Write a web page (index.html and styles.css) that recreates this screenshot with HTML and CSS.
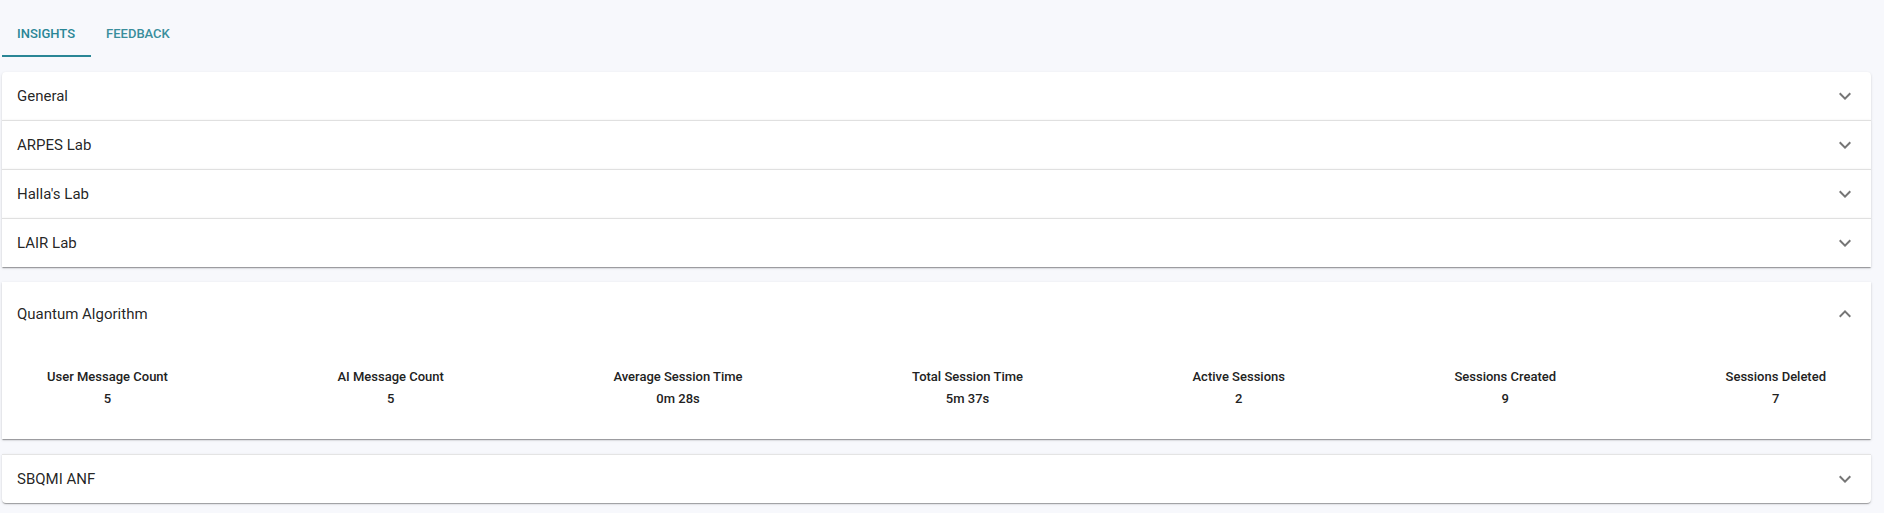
FILE: index.html
```html
<!DOCTYPE html>
<html lang="en">
<head>
<meta charset="utf-8">
<title>Insights</title>
<link rel="stylesheet" href="styles.css">
</head>
<body>
<div class="page">
  <div class="tabs">
    <div class="tab tab-active">INSIGHTS</div>
    <div class="tab">FEEDBACK</div>
  </div>

  <div class="accordions">
    <div class="acc acc-first">
      <div class="summary"><span class="title">General</span><svg class="chev" viewBox="0 0 24 24"><path d="M16.59 8.59 12 13.17 7.41 8.59 6 10l6 6 6-6z"/></svg></div>
    </div>
    <div class="acc acc-line">
      <div class="summary"><span class="title">ARPES Lab</span><svg class="chev" viewBox="0 0 24 24"><path d="M16.59 8.59 12 13.17 7.41 8.59 6 10l6 6 6-6z"/></svg></div>
    </div>
    <div class="acc acc-line">
      <div class="summary"><span class="title">Halla's Lab</span><svg class="chev" viewBox="0 0 24 24"><path d="M16.59 8.59 12 13.17 7.41 8.59 6 10l6 6 6-6z"/></svg></div>
    </div>
    <div class="acc acc-line">
      <div class="summary"><span class="title">LAIR Lab</span><svg class="chev" viewBox="0 0 24 24"><path d="M16.59 8.59 12 13.17 7.41 8.59 6 10l6 6 6-6z"/></svg></div>
    </div>

    <div class="acc acc-expanded">
      <div class="summary summary-expanded"><span class="title">Quantum Algorithm</span><svg class="chev chev-up" viewBox="0 0 24 24"><path d="M16.59 8.59 12 13.17 7.41 8.59 6 10l6 6 6-6z"/></svg></div>
      <div class="details">
        <div class="stats">
          <div class="stat"><div class="stat-label">User Message Count</div><div class="stat-value">5</div></div>
          <div class="stat"><div class="stat-label">AI Message Count</div><div class="stat-value">5</div></div>
          <div class="stat"><div class="stat-label">Average Session Time</div><div class="stat-value">0m 28s</div></div>
          <div class="stat"><div class="stat-label">Total Session Time</div><div class="stat-value">5m 37s</div></div>
          <div class="stat"><div class="stat-label">Active Sessions</div><div class="stat-value">2</div></div>
          <div class="stat"><div class="stat-label">Sessions Created</div><div class="stat-value">9</div></div>
          <div class="stat"><div class="stat-label">Sessions Deleted</div><div class="stat-value">7</div></div>
        </div>
      </div>
    </div>

    <div class="acc acc-last">
      <div class="summary"><span class="title">SBQMI ANF</span><svg class="chev" viewBox="0 0 24 24"><path d="M16.59 8.59 12 13.17 7.41 8.59 6 10l6 6 6-6z"/></svg></div>
    </div>
  </div>
</div>
</body>
</html>
```

FILE: styles.css
```css
* { box-sizing: border-box; }

html, body {
  margin: 0;
  padding: 0;
  background: #f7f8fc;
  font-family: Roboto, "Liberation Sans", Arial, sans-serif;
  color: rgba(0, 0, 0, 0.87);
}

.page {
  padding: 9px 13px 0 2px;
  height: 513px;
  overflow: hidden;
}

.tabs {
  display: flex;
  height: 48px;
}

.tab {
  display: flex;
  align-items: center;
  padding: 0 15px;
  font-size: 13px;
  font-weight: 500;
  color: #3a8e9c;
  border-bottom: 2px solid transparent;
  padding-top: 2px;
}

.tab-active {
  color: #2a8696;
  border-bottom-color: #2a8696;
  padding-right: 16px;
}

.accordions {
  margin-top: 15px;
}

.acc {
  background: #fff;
  box-shadow: 0px 2px 1px -1px rgba(0,0,0,0.2), 0px 1px 1px 0px rgba(0,0,0,0.14), 0px 1px 3px 0px rgba(0,0,0,0.12);
  position: relative;
}

.acc-first {
  border-top-left-radius: 4px;
  border-top-right-radius: 4px;
}

.acc-line {
  border-top: 1px solid #e0e0e0;
}

.acc-expanded {
  margin: 15px 0;
}

.acc-last {
  border-top: 1px solid #e4e4e4;
  border-bottom-left-radius: 4px;
  border-bottom-right-radius: 4px;
}

.summary {
  display: flex;
  align-items: center;
  justify-content: space-between;
  height: 48px;
  padding: 0 14px 0 15px;
}

.summary-expanded {
  height: 64px;
}

.title {
  font-size: 15px;
  line-height: 20px;
  color: rgba(0, 0, 0, 0.87);
}

.chev {
  width: 24px;
  height: 24px;
  fill: rgba(0, 0, 0, 0.54);
  flex: none;
}

.chev-up {
  transform: rotate(180deg);
}

.details {
  padding: 8px 16px 16px 16px;
}

.stats {
  display: flex;
  justify-content: space-between;
  padding: 13px 29px 14px 29px;
}

.stat {
  text-align: center;
  font-size: 13px;
  font-weight: 500;
  line-height: 20px;
  color: #222;
}

.stat-value {
  margin-top: 2px;
}
```
